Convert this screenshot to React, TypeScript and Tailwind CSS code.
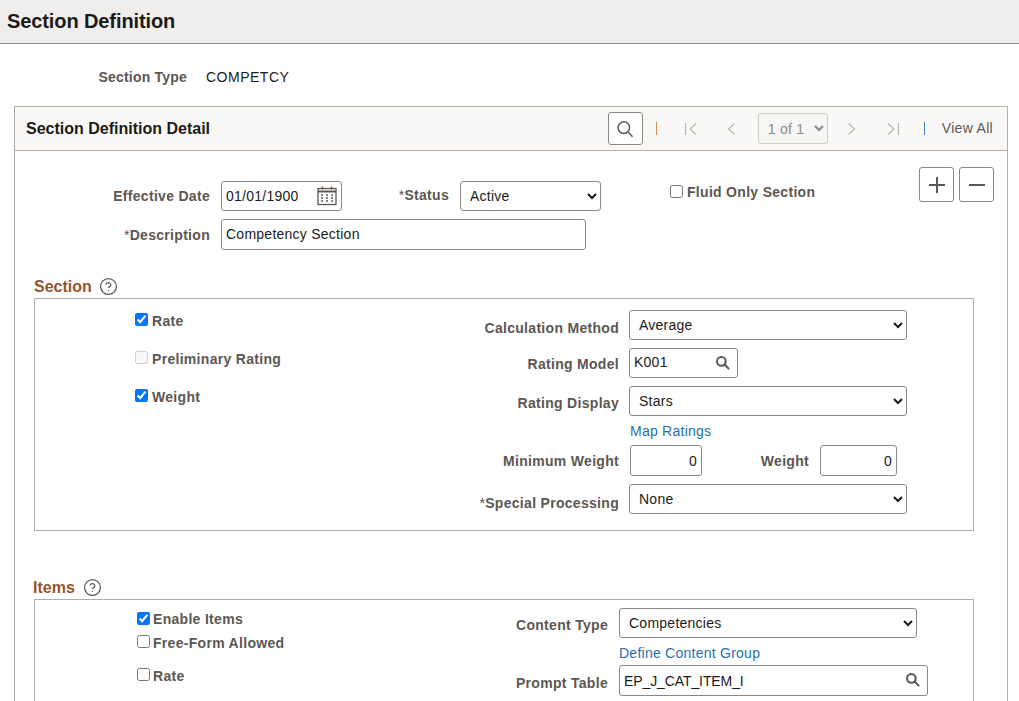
import { CircleHelp } from "lucide-react"

function Label({ className, star, children }: { className: string; star?: boolean; children: string }) {
  return (
    <span className={`shrink-0 text-right text-[14px] font-bold tracking-[0.3px] text-[#5c5752] ${className}`}>
      {star && <span className="font-normal">*</span>}
      {children}
    </span>
  )
}

function Check({ label, checked, disabled, className, textClass }: { label: string; checked?: boolean; disabled?: boolean; className?: string; textClass?: string }) {
  return (
    <label className={`flex items-center h-[13px] text-[14px] font-bold tracking-[0.3px] text-[#5c5752] ${className ?? ""}`}>
      <input type="checkbox" defaultChecked={checked} disabled={disabled} className="m-0 w-[13px] h-[13px] shrink-0" />
      <span className={`whitespace-nowrap ${textClass ?? "ml-[4px] pt-[4px]"}`}>{label}</span>
    </label>
  )
}

function Select({ value, className }: { value: string; className: string }) {
  return (
    <select defaultValue={value} className={`h-[30px] pl-[5px] rounded-[3px] border border-[#8c8781] bg-white text-[14px] text-[#1c1a18] ${className}`}>
      <option>{value}</option>
    </select>
  )
}

function Field({ value, className }: { value: string; className: string }) {
  return (
    <input defaultValue={value} className={`h-[31px] rounded-[3px] border border-[#8c8781] bg-white text-[14px] text-[#1c1a18] outline-none ${className}`} />
  )
}

function LookupIcon() {
  return (
    <svg viewBox="0 0 16 16" className="absolute w-[15px] h-[15px] top-[7px] right-[8px]" fill="none" stroke="#5c5752" strokeWidth="2.2">
      <circle cx="6.8" cy="6.8" r="4.6" />
      <path d="M10.2 10.2l4.2 4.2" strokeLinecap="round" />
    </svg>
  )
}

function Pager({ d }: { d: string }) {
  return (
    <svg viewBox="0 0 14 14" className="w-[14px] h-[14px]" fill="none" stroke="#b9b5b0" strokeWidth="1.2">
      <path d={d} />
    </svg>
  )
}

export default function App() {
  return (
    <div className="h-[701px] overflow-hidden bg-white font-['Liberation_Sans',Arial,sans-serif] text-[14px] tracking-[0.25px] text-[#1c1a18]">
      <div className="h-[44px] bg-[#f0eeec] border-b border-[#8c8781] pl-[7px] pt-[8px] text-[20px] leading-[26px] font-bold tracking-[-0.1px] text-[#1c1a18]">
        Section Definition
      </div>

      {/* Section type */}
      <div className="flex mt-[23px] h-[20px] items-center">
        <Label className="w-[187px] !tracking-[0.2px]">Section Type</Label>
        <span className="ml-[19px] tracking-[0.5px]">COMPETCY</span>
      </div>

      {/* Panel */}
      <div className="mt-[19px] ml-[14px] w-[994px] border border-[#b5aea6] h-[800px]">
        <div className="h-[44px] flex items-center bg-[#f9f8f6] border-b border-[#b5aea6] pl-[11px]">
          <span className="text-[16px] font-bold tracking-[0px]">Section Definition Detail</span>
          <div className="ml-auto flex items-center pr-[14px]">
            <button className="w-[35px] h-[33px] flex items-center justify-center rounded-[3px] border border-[#8c8781] bg-white">
              <svg viewBox="0 0 18 18" className="w-[18px] h-[18px]" fill="none" stroke="#5c5752" strokeWidth="1.5">
                <circle cx="7.8" cy="7.6" r="5.8" />
                <path d="M12 12l4.6 4.8" />
              </svg>
            </button>
            <span className="ml-[13px] -mt-[1px] w-px h-[13px] bg-[#cf8f52]" />
            <span className="ml-[27px]"><Pager d="M1.5 1v12M12 1.5L6 7l6 5.5" /></span>
            <span className="ml-[26px]"><Pager d="M10.5 1.5L4.5 7l6 5.5" /></span>
            <select disabled defaultValue="1 of 1" className="ml-[20px] w-[70px] h-[31px] pl-[5px] rounded-[3px] border border-[#cfcbc6] bg-[#f7f6f4] text-[14px] text-[#8a8a8a] opacity-100">
              <option>1 of 1</option>
            </select>
            <span className="ml-[17px]"><Pager d="M3.5 1.5L9.5 7l-6 5.5" /></span>
            <span className="ml-[27px]"><Pager d="M2 1.5L8 7l-6 5.5M12.5 1v12" /></span>
            <span className="ml-[24px] -mt-[1px] w-px h-[13px] bg-[#3b82c4]" />
            <span className="ml-[17px] text-[#5c5752] tracking-[0.3px]">View All</span>
          </div>
        </div>

        {/* Top fields */}
        <div className="flex justify-between">
          <div className="pt-[30px]">
            <div className="flex items-start">
              <div className="flex items-center">
                <Label className="w-[195px]">Effective Date</Label>
                <div className="relative ml-[11px] w-[121px] h-[30px]">
                  <input defaultValue="01/01/1900" className="w-full h-full pl-[4px] rounded-[3px] border border-[#8c8781] text-[14px] outline-none" />
                  <svg viewBox="0 0 20 20" className="absolute w-[20px] h-[20px] top-[5px] right-[5px]" fill="none" stroke="#5c5752">
                    <rect x="1" y="2.5" width="18" height="16" strokeWidth="1.3" />
                    <path d="M1 5.5h18" strokeWidth="2" />
                    <path d="M5.5 0.5v3M14.5 0.5v3" strokeWidth="1.4" />
                    <path d="M4 9h2M9 9h2M14 9h2M4 12h2M9 12h2M14 12h2M4 15h2M9 15h2M14 15h2" strokeWidth="1.4" />
                  </svg>
                </div>
                <Label star className="w-[107px] -mt-[2px]">Status</Label>
                <Select value="Active" className="ml-[11px] w-[141px]" />
              </div>
              <Check label="Fluid Only Section" className="ml-[69px] mt-[4px]" textClass="ml-[4px] pt-[1px]" />
            </div>
            <div className="flex items-center mt-[8px]">
              <Label star className="w-[195px] mt-[2px]">Description</Label>
              <Field value="Competency Section" className="ml-[11px] w-[365px] pl-[4px] pb-[2px]" />
            </div>
          </div>
          <div className="flex gap-[5px] pt-[16px] pr-[13px]">
            <button className="w-[35px] h-[35px] flex items-center justify-center rounded-[3px] border border-[#8c8781] bg-white">
              <svg viewBox="0 0 18 18" className="w-[18px] h-[18px]" stroke="#5c5752" strokeWidth="2"><path d="M9 1v16M1 9h16" /></svg>
            </button>
            <button className="w-[35px] h-[35px] flex items-center justify-center rounded-[3px] border border-[#8c8781] bg-white">
              <svg viewBox="0 0 18 18" className="w-[18px] h-[18px]" stroke="#5c5752" strokeWidth="2"><path d="M1 9h16" /></svg>
            </button>
          </div>
        </div>

        {/* Section */}
        <div className="ml-[19px] mt-[26px] mb-[2px] h-[20px] flex items-center">
          <span className="pt-[2px] text-[16px] font-bold tracking-[0px] text-[#95552b]">Section</span>
          <CircleHelp className="ml-[7px] w-[19px] h-[19px] text-[#5c5752]" strokeWidth={1.6} />
        </div>
        <div className="ml-[19px] w-[940px] border border-[#b5aea6] flex pb-[16px]">
          <div className="w-[300px] pl-[100px] pt-[14px] flex flex-col gap-[25px]">
            <Check label="Rate" checked />
            <Check label="Preliminary Rating" disabled />
            <Check label="Weight" checked />
          </div>
          <div className="pt-[11px] flex flex-col">
            <div className="flex items-center">
              <Label className="w-[284px] mt-[6px]">Calculation Method</Label>
              <Select value="Average" className="ml-[10px] w-[278px]" />
            </div>
            <div className="flex items-center mt-[8px]">
              <Label className="w-[284px] mt-[2px]">Rating Model</Label>
              <div className="relative ml-[10px] w-[109px] h-[30px]">
                <Field value="K001" className="w-full !h-full pl-[4px] pb-[2px]" />
                <LookupIcon />
              </div>
            </div>
            <div className="flex items-center mt-[8px]">
              <Label className="w-[284px] mt-[4px]">Rating Display</Label>
              <Select value="Stars" className="ml-[10px] w-[278px]" />
            </div>
            <a className="ml-[295px] mt-[7px] h-[16px] leading-[16px] text-[#1f6fb2]">Map Ratings</a>
            <div className="flex items-center mt-[6px]">
              <Label className="w-[284px] mt-[2px]">Minimum Weight</Label>
              <Field value="0" className="ml-[11px] w-[72px] text-right pr-[4px] pt-[1px]" />
              <Label className="w-[107px] mt-[2px]">Weight</Label>
              <Field value="0" className="ml-[11px] w-[77px] text-right pr-[4px] pt-[1px]" />
            </div>
            <div className="flex items-center mt-[8px]">
              <Label star className="w-[284px] mt-[8px]">Special Processing</Label>
              <Select value="None" className="ml-[10px] w-[278px]" />
            </div>
          </div>
        </div>

        {/* Items */}
        <div className="ml-[18px] mt-[46px] mb-[2px] h-[20px] flex items-center">
          <span className="pt-[2px] text-[16px] font-bold tracking-[0px] text-[#95552b]">Items</span>
          <CircleHelp className="ml-[8px] w-[19px] h-[19px] text-[#5c5752]" strokeWidth={1.6} />
        </div>
        <div className="ml-[19px] w-[940px] border border-[#b5aea6] flex h-[200px]">
          <div className="w-[300px] pl-[102px] pt-[12px] flex flex-col">
            <Check label="Enable Items" checked textClass="ml-[3px] pt-[2px]" />
            <Check label="Free-Form Allowed" className="mt-[10px]" textClass="ml-[3px] pt-[4px]" />
            <Check label="Rate" className="mt-[20px]" textClass="ml-[3px] pt-[4px]" />
          </div>
          <div className="pt-[8px] flex flex-col">
            <div className="flex items-center">
              <Label className="w-[273px] mt-[4px]">Content Type</Label>
              <Select value="Competencies" className="ml-[11px] w-[298px]" />
            </div>
            <a className="ml-[284px] mt-[7px] h-[16px] leading-[16px] text-[#1f6fb2]">Define Content Group</a>
            <div className="flex items-center mt-[4px]">
              <Label className="w-[273px] mt-[6px]">Prompt Table</Label>
              <div className="relative ml-[11px] w-[309px] h-[31px]">
                <Field value="EP_J_CAT_ITEM_I" className="w-full pl-[4px] tracking-[-0.1px]" />
                <LookupIcon />
              </div>
            </div>
          </div>
        </div>
      </div>
    </div>
  )
}
